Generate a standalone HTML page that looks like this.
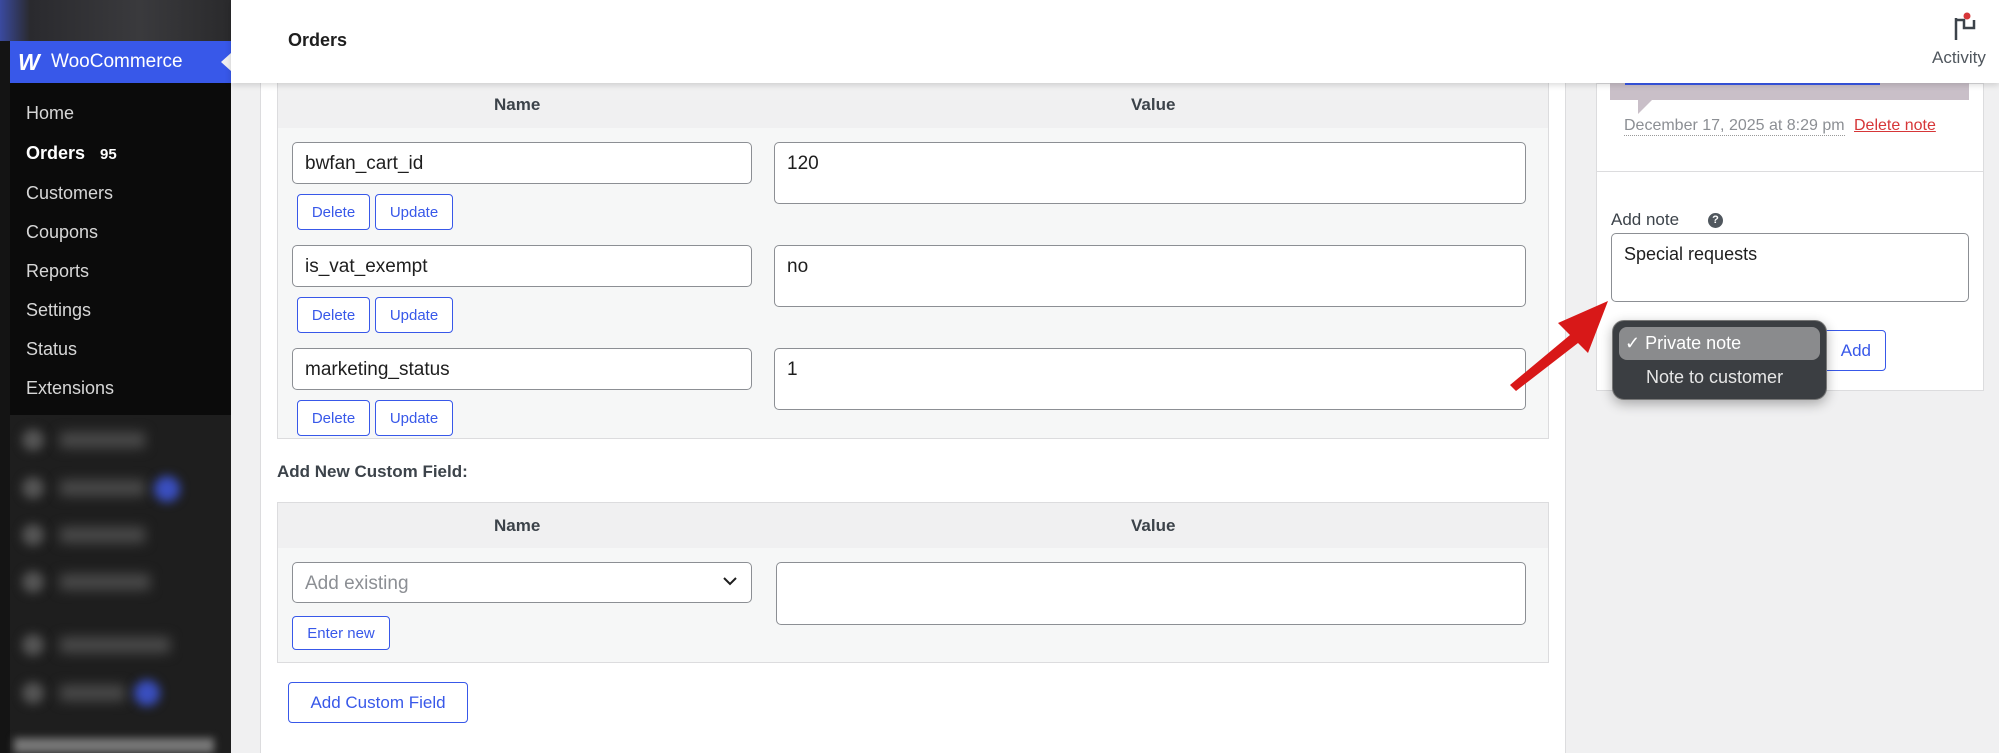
<!DOCTYPE html>
<html><head><meta charset="utf-8"><style>
*{box-sizing:border-box;margin:0;padding:0}
body{width:1999px;height:753px;overflow:hidden;background:#f0f0f1;font-family:"Liberation Sans",Arial,sans-serif;position:relative;color:#1e1e1e}
.a{position:absolute}
.side{left:0;top:0;width:231px;height:753px;background:#1e1e1e}
.menu{left:10px;top:83px;width:221px;height:332px;background:#0b0b0b}
.mi{position:absolute;left:26px;color:#d7d7d7;font-size:18px}
.inp{background:#fff;border:1.5px solid #8c8f94;border-radius:5px;font-size:19px;padding:10px 12px;color:#1e1e1e}
.ta{background:#fff;border:1.5px solid #8c8f94;border-radius:5px;font-size:19px;padding:10px 12px}
.btn{background:#fff;border:1.5px solid #3858e9;border-radius:4px;color:#3858e9;font-size:15px;display:flex;align-items:center;justify-content:center}
.th{font-weight:bold;font-size:17px;color:#3c434a}
.bi{position:absolute;left:22px;width:22px;height:22px;border-radius:50%;background:#555;filter:blur(5px)}
.bt{position:absolute;left:60px;height:16px;background:#4a4a4a;filter:blur(6px)}
.bd{position:absolute;width:26px;height:26px;border-radius:50%;background:#3a4fc0;filter:blur(5px)}
</style></head><body>
<div class="a side"></div>
<div class="a" style="left:0;top:0;width:231px;height:41px;background:linear-gradient(90deg,#3a4aa0 0,#2a2a2e 30px,#3a3a3d 140px,#2a2a2c 231px)"></div>
<div class="a" style="left:0;top:41px;width:10px;height:712px;background:#141414"></div>
<div class="a" style="left:10px;top:41px;width:221px;height:42px;background:#3858e9"></div>
<div class="a" style="left:18px;top:49px;color:#fff;font-weight:900;font-style:italic;font-size:23px;letter-spacing:-2px">W</div>
<div class="a" style="left:51px;top:51px;color:#fff;font-size:19px">WooCommerce</div>
<div class="a" style="left:221px;top:53px;width:0;height:0;border-top:9px solid transparent;border-bottom:9px solid transparent;border-right:10px solid #f0f0f1"></div>
<div class="a menu"></div>
<div class="mi" style="top:103px">Home</div>
<div class="mi" style="top:143px;color:#fff;font-weight:bold">Orders <span style="font-size:15px;margin-left:10px">95</span></div>
<div class="mi" style="top:183px">Customers</div>
<div class="mi" style="top:222px">Coupons</div>
<div class="mi" style="top:261px">Reports</div>
<div class="mi" style="top:300px">Settings</div>
<div class="mi" style="top:339px">Status</div>
<div class="mi" style="top:378px">Extensions</div>

<div class="bi" style="top:429px"></div><div class="bt" style="top:432px;width:85px"></div>
<div class="bi" style="top:477px"></div><div class="bt" style="top:480px;width:85px"></div><div class="bd" style="left:154px;top:476px"></div>
<div class="bi" style="top:524px"></div><div class="bt" style="top:527px;width:85px"></div>
<div class="bi" style="top:571px"></div><div class="bt" style="top:574px;width:90px"></div>
<div class="bi" style="top:634px"></div><div class="bt" style="top:637px;width:110px"></div>
<div class="bi" style="top:682px"></div><div class="bt" style="top:685px;width:65px"></div><div class="bd" style="left:134px;top:680px"></div>
<div class="a" style="left:14px;top:738px;width:200px;height:15px;background:#777;filter:blur(4px)"></div>

<div class="a" style="left:231px;top:0;width:1768px;height:83px;background:#fff;box-shadow:0 2px 6px rgba(0,0,0,.15);z-index:2"></div>
<div class="a" style="left:288px;top:30px;font-weight:bold;font-size:18px;z-index:3">Orders</div>
<svg class="a" style="left:1950px;top:12px;z-index:3" width="30" height="32" viewBox="0 0 30 32"><path d="M6 6v22M6 8h8v8h10v-8" fill="none" stroke="#3c434a" stroke-width="2.5"/><circle cx="17" cy="4" r="3.5" fill="#d63638"/></svg>
<div class="a" style="left:1932px;top:48px;font-size:17px;color:#50575e;z-index:3">Activity</div>

<div class="a" style="left:260px;top:83px;width:1306px;height:670px;background:#fff;border-left:1px solid #dcdcde;border-right:1px solid #dcdcde"></div>
<div class="a" style="left:277px;top:83px;width:1272px;height:356px;background:#f6f7f7;border:1px solid #dcdcde"></div>
<div class="a" style="left:278px;top:83px;width:1270px;height:45px;background:#f0f0f1"></div>
<div class="a th" style="left:494px;top:95px">Name</div>
<div class="a th" style="left:1131px;top:95px">Value</div>

<div class="a inp" style="left:292px;top:142px;width:460px;height:42px">bwfan_cart_id</div>
<div class="a ta" style="left:774px;top:142px;width:752px;height:62px">120</div>
<div class="a btn" style="left:297px;top:194px;width:73px;height:36px">Delete</div>
<div class="a btn" style="left:375px;top:194px;width:78px;height:36px">Update</div>

<div class="a inp" style="left:292px;top:245px;width:460px;height:42px">is_vat_exempt</div>
<div class="a ta" style="left:774px;top:245px;width:752px;height:62px">no</div>
<div class="a btn" style="left:297px;top:297px;width:73px;height:36px">Delete</div>
<div class="a btn" style="left:375px;top:297px;width:78px;height:36px">Update</div>

<div class="a inp" style="left:292px;top:348px;width:460px;height:42px">marketing_status</div>
<div class="a ta" style="left:774px;top:348px;width:752px;height:62px">1</div>
<div class="a btn" style="left:297px;top:400px;width:73px;height:36px">Delete</div>
<div class="a btn" style="left:375px;top:400px;width:78px;height:36px">Update</div>

<div class="a" style="left:277px;top:462px;font-weight:bold;font-size:17px;color:#3c434a">Add New Custom Field:</div>
<div class="a" style="left:277px;top:502px;width:1272px;height:161px;background:#f6f7f7;border:1px solid #dcdcde"></div>
<div class="a" style="left:278px;top:503px;width:1270px;height:45px;background:#f0f0f1"></div>
<div class="a th" style="left:494px;top:516px">Name</div>
<div class="a th" style="left:1131px;top:516px">Value</div>
<div class="a inp" style="left:292px;top:562px;width:460px;height:41px;color:#8c8f94">Add existing</div>
<svg class="a" style="left:722px;top:575px" width="16" height="12"><path d="M2 3l6 6 6-6" fill="none" stroke="#1e1e1e" stroke-width="2"/></svg>
<div class="a ta" style="left:776px;top:562px;width:750px;height:63px"></div>
<div class="a btn" style="left:292px;top:616px;width:98px;height:34px">Enter new</div>
<div class="a btn" style="left:288px;top:682px;width:180px;height:41px;font-size:17px">Add Custom Field</div>

<div class="a" style="left:1596px;top:83px;width:388px;height:308px;background:#fff;border:1px solid #dcdcde"></div>
<div class="a" style="left:1610px;top:83px;width:359px;height:17px;background:#c9bfc8"></div>
<div class="a" style="left:1625px;top:83px;width:255px;height:2px;background:#3858e9"></div>
<div class="a" style="left:1638px;top:100px;width:0;height:0;border-top:14px solid #c9bfc8;border-right:14px solid transparent"></div>
<div class="a" style="left:1624px;top:117px;font-size:16px;color:#8c8f94;border-bottom:1px dotted #999;line-height:18px">December 17, 2025 at 8:29 pm</div>
<div class="a" style="left:1854px;top:117px;font-size:16px;color:#d63638;text-decoration:underline;line-height:18px">Delete note</div>
<div class="a" style="left:1596px;top:171px;width:388px;height:1px;background:#dcdcde"></div>
<div class="a" style="left:1611px;top:210px;font-size:17px;color:#3c434a">Add note</div>
<div class="a" style="left:1708px;top:213px;width:15px;height:15px;border-radius:50%;background:#50575e;color:#fff;font-size:11px;font-weight:bold;text-align:center;line-height:15px">?</div>
<div class="a ta" style="left:1611px;top:233px;width:358px;height:69px;font-size:18px">Special requests</div>
<div class="a btn" style="left:1812px;top:330px;width:74px;height:41px;font-size:17px;justify-content:flex-end;padding-right:14px">Add</div>
<div class="a" style="left:1612px;top:320px;width:215px;height:80px;background:#3b3e42;border:1px solid #777;border-radius:12px;box-shadow:0 4px 12px rgba(0,0,0,.3)"></div>
<div class="a" style="left:1619px;top:327px;width:201px;height:33px;background:#8a8b8d;border-radius:8px"></div>
<div class="a" style="left:1625px;top:333px;color:#fff;font-size:18px">✓ Private note</div>
<div class="a" style="left:1646px;top:367px;color:#e6e6e6;font-size:18px">Note to customer</div>
<svg class="a" style="left:1500px;top:295px" width="115" height="100"><path d="M10 90L70 40L58 28L108 6L88 58L78 48L16 96Z" fill="#d81818"/></svg>
</body></html>
